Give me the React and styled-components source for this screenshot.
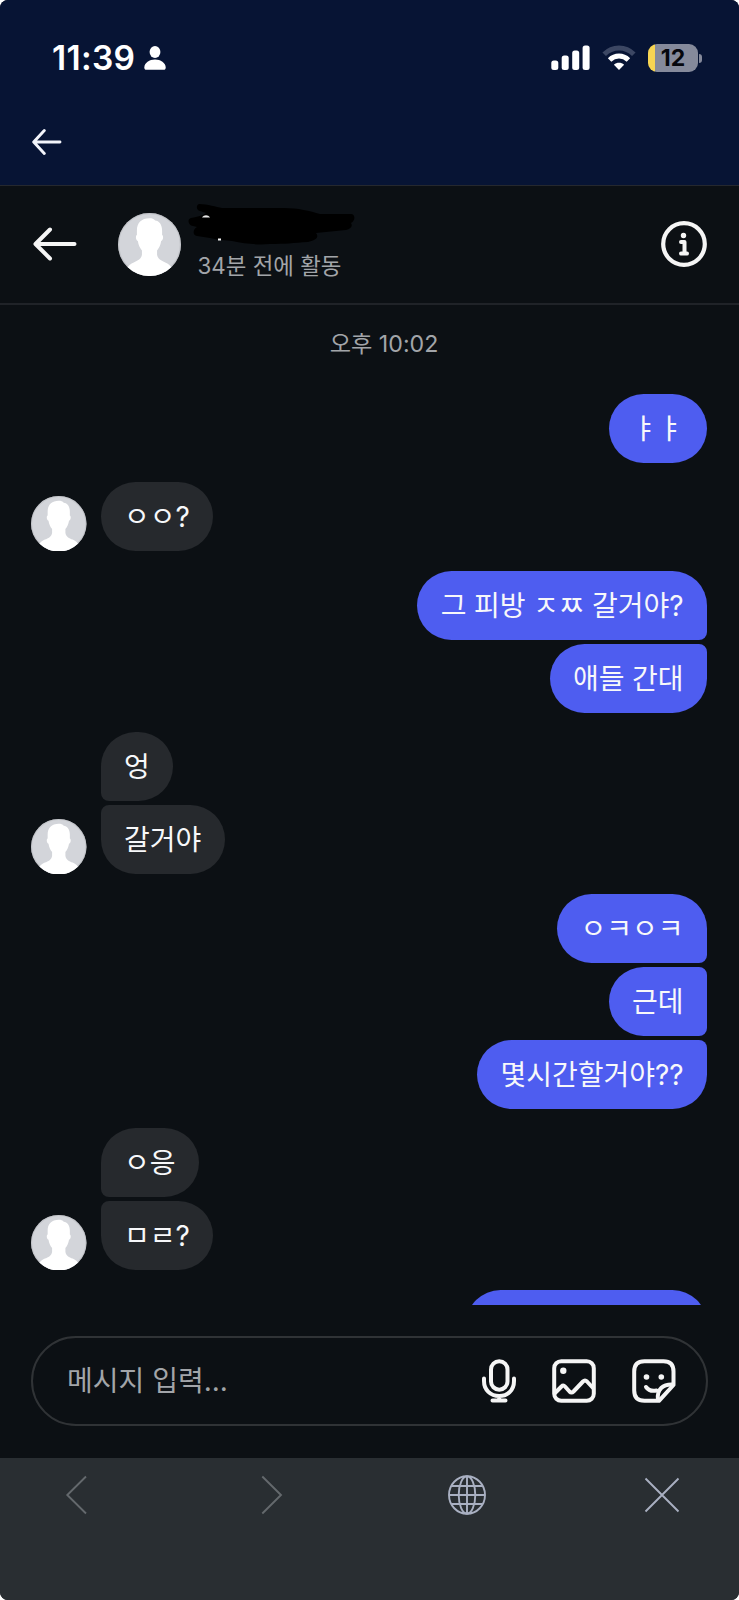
import React from 'react';
import styled, { createGlobalStyle } from 'styled-components';

const groups = [
  { mine: true, messages: ['ㅑㅑ'] },
  { mine: false, messages: ['ㅇㅇ?'] },
  { mine: true, messages: ['그 피방 ㅈㅉ 갈거야?', '애들 간대'] },
  { mine: false, messages: ['엉', '갈거야'] },
  { mine: true, messages: ['ㅇㅋㅇㅋ', '근데', '몇시간할거야??'] },
  { mine: false, messages: ['ㅇ응', 'ㅁㄹ?'] },
  { mine: true, messages: [''] },
];

const Avatar = ({ size }) => (
  <AvatarSvg $size={size} viewBox="0 0 100 100">
    <circle cx="50" cy="50" r="50" fill="#d3d5da" />
    <circle cx="50" cy="50" r="49" fill="none" stroke="#b9bbc0" strokeWidth="2" strokeOpacity="0.6" />
    <path
      d="M50 8.5C37 8.5 30 16 30 28V35C27.500 36 28 43 31.500 44.500C32.500 51 35 56 38 59.500V66C37.500 73 31 76 25 78.500C20 80.500 17 83 15.500 86.200A50 50 0 0 0 84.500 86.200C83 83 80 80.500 75 78.500C69 76 62.500 73 62 66V59.500C65 56 67.500 51 68.500 44.500C72 43 72.500 36 70 35V28C70 18 65 12.500 59 12C57 9.500 54 8.500 50 8.500Z"
      fill="#fff"
    />
  </AvatarSvg>
);

const StatusBar = () => (
  <Status>
    <Clock>11:39</Clock>
    <svg width="24" height="24" viewBox="0 0 24 24" fill="#fff">
      <ellipse cx="12" cy="6" rx="5.400" ry="6" />
      <path d="M12 13.500C17.500 13.500 22.700 17 22.700 21.500C22.700 23 22 23.800 20.700 23.800H3.300C2 23.800 1.300 23 1.300 21.500C1.300 17 6.500 13.500 12 13.500Z" />
    </svg>
    <Indicators>
      <svg width="39" height="26" viewBox="0 0 39 26" fill="#fff">
        <rect x="0.300" y="15.500" width="7" height="9.500" rx="2.500" />
        <rect x="10.700" y="10.500" width="7" height="14.500" rx="2.500" />
        <rect x="21.200" y="5.500" width="7" height="19.500" rx="2.500" />
        <rect x="31.600" y="0.500" width="7" height="24.500" rx="2.500" />
      </svg>
      <svg width="34" height="26" viewBox="0 0 34 26" fill="none">
        <path d="M2.200 9.300C10.500 0.900 23.500 0.900 31.800 9.300" stroke="#3c4763" strokeWidth="5" />
        <path d="M7.600 15C13 9.800 21 9.800 26.400 15" stroke="#fff" strokeWidth="5" />
        <path d="M17 25L11.900 19.800C14.800 17.200 19.200 17.200 22.100 19.800Z" fill="#fff" />
      </svg>
      <Battery>
        <Level>12</Level>
        <Nub />
      </Battery>
    </Indicators>
  </Status>
);

// name of the other person, crossed out with a marker
const HiddenName = () => (
  <Scribble width="168" height="46" viewBox="0 0 168 46">
    <path
      d="M11 2C8 3 8 8 12 9L18 11C14 14 8 15 3 16C-1 17 0 23 5 24L9 25C5 27 4 33 9 34L22 36C30 38 38 38 44 39C58 42 70 43 82 42C96 42 106 41 120 40C126 39 132 36 128 31L158 28C163 27 165 24 163 21C168 18 167 12 163 12H132C122 9 110 6 96 6H34C28 5 20 2 11 2Z"
      fill="#000"
    />
    <path d="M14 15.500C16 12.500 20 12.500 22 15.500Z" fill="#e8e8e8" />
    <rect x="30" y="36.500" width="3" height="2" fill="#f4f4f4" />
  </Scribble>
);

const App = () => {
  return (
    <>
      <GlobalStyle />
      <Screen>
        <TopBar>
          <StatusBar />
          <AppNav>
            <svg width="30" height="28" viewBox="0 0 30 28" fill="none" stroke="#f2f4fa" strokeWidth="2.900" strokeLinecap="round">
              <path d="M12.300 2.500L1.700 14L12.300 25.500M2 14H28" strokeLinejoin="round" />
            </svg>
          </AppNav>
        </TopBar>
        <ThreadHeader>
          <svg width="44" height="36" viewBox="0 0 44 36" fill="none" stroke="#f5f5f5" strokeWidth="4" strokeLinecap="round" strokeLinejoin="round">
            <path d="M17 3.500L2.500 18L17 32.500M3 18H41.500" />
          </svg>
          <Avatar size={63} />
          <Person>
            <HiddenName />
            <Activity>34분 전에 활동</Activity>
          </Person>
          <svg width="46" height="46" viewBox="0 0 46 46" fill="none" stroke="#f5f5f5" strokeLinecap="round" strokeLinejoin="round">
            <circle cx="23" cy="23" r="20.800" strokeWidth="4.200" />
            <circle cx="22.500" cy="14.500" r="2.700" fill="#f5f5f5" stroke="none" />
            <path d="M20 21H23.500V32.500M20 32.500H26" strokeWidth="4" />
          </svg>
        </ThreadHeader>
        <Thread>
          <Timestamp>오후 10:02</Timestamp>
          {groups.map((group, index) => (
            <Group key={index} $mine={group.mine}>
              {!group.mine && <Avatar size={55.5} />}
              <Stack $mine={group.mine}>
                {group.messages.map((text, i) => (
                  <Bubble
                    key={i}
                    $mine={group.mine}
                    $first={i === 0}
                    $last={i === group.messages.length - 1}
                    $empty={!text}
                  >
                    {text}
                  </Bubble>
                ))}
              </Stack>
            </Group>
          ))}
        </Thread>
        <Composer>
          <Placeholder>메시지 입력...</Placeholder>
          <Tools>
            <svg width="34" height="44" viewBox="0 0 34 44" fill="none" stroke="#f5f5f5" strokeWidth="4" strokeLinecap="round">
              <rect x="9" y="2.200" width="16.500" height="28.500" rx="8.250" />
              <path d="M2 19.500V22C2 31 8.500 37 17.200 37S32 31 32 22V19.500M17.200 37V41.500M10.500 41.500H23.500" />
            </svg>
            <svg width="44" height="44" viewBox="0 0 44 44" fill="none" stroke="#f5f5f5" strokeWidth="4" strokeLinejoin="round">
              <rect x="2.200" y="2.200" width="39.600" height="39.600" rx="7" />
              <circle cx="11.300" cy="11.700" r="3.200" fill="#f5f5f5" stroke="none" />
              <path d="M2.500 34.500L9.500 27.500Q11.300 25.700 13 27.500L17.500 32.500Q19.500 34.500 21.500 32.500L31 22.500Q33 20.500 35 22.500L41.500 29.500" />
            </svg>
            <svg width="44" height="44" viewBox="0 0 44 44" fill="none" stroke="#f5f5f5" strokeWidth="4" strokeLinecap="round" strokeLinejoin="round">
              <path d="M12.500 2.200H31.500Q41.500 2.200 41.500 12.500V26L27 41.800H12.500Q2.200 41.800 2.200 31.500V12.500Q2.200 2.200 12.500 2.200Z" />
              <path d="M41 25.500C31 25 24.500 30 26 41" />
              <path d="M14 28C16.500 31.500 20 32.500 24.500 31.500" />
              <circle cx="14.500" cy="18" r="2.800" fill="#f5f5f5" stroke="none" />
              <circle cx="29.300" cy="18" r="2.800" fill="#f5f5f5" stroke="none" />
            </svg>
          </Tools>
        </Composer>
        <BrowserBar>
          <BarIcon viewBox="0 0 40 40" $color="#64696d">
            <path d="M30 1.500L11.300 20L30 38.500" />
          </BarIcon>
          <BarIcon viewBox="0 0 40 40" $color="#64696d">
            <path d="M11.300 1.500L30 20L11.300 38.500" />
          </BarIcon>
          <BarIcon viewBox="0 0 40 40" $color="#a9b0c2">
            <ellipse cx="20" cy="20" rx="18" ry="18.700" />
            <ellipse cx="20" cy="20" rx="8.300" ry="18.700" />
            <path d="M20 1.300V38.700M2 20H38M5 11H35M5 29H35" />
          </BarIcon>
          <BarIcon viewBox="0 0 40 40" $color="#a9b0c2">
            <path d="M3.500 3.500L36.500 36.500M36.500 3.500L3.500 36.500" />
          </BarIcon>
        </BrowserBar>
      </Screen>
    </>
  );
};

const GlobalStyle = createGlobalStyle`
  * {
    box-sizing: border-box;
  }
  body {
    margin: 0;
    background-color: #fff;
    font-family: Inter, "Noto Sans CJK KR", sans-serif;
  }
  svg {
    display: block;
    flex-shrink: 0;
  }
`;

const Screen = styled.div`
  display: flex;
  flex-direction: column;
  width: 739px;
  height: 1600px;
  border-radius: 8px;
  overflow: hidden;
  background-color: #0c1014;
`;

const TopBar = styled.div`
  height: 186px;
  border-bottom: 1px solid #25282e;
  background-color: #071434;
`;

const Status = styled.div`
  display: flex;
  align-items: center;
  height: 116px;
  padding: 0 37px 0 52px;
`;

const Clock = styled.span`
  width: 91px;
  color: #fff;
  font-size: 33.500px;
  font-weight: 600;
  letter-spacing: 0.300px;
  line-height: 40px;
`;

const Indicators = styled.div`
  display: flex;
  align-items: center;
  gap: 12px;
  margin-left: auto;
`;

const Battery = styled.div`
  display: flex;
  align-items: center;
  gap: 1px;
`;

const Level = styled.div`
  width: 50px;
  height: 28px;
  border-radius: 9px;
  background: linear-gradient(90deg, #f7d553 7px, #858a9b 7px);
  color: #05070d;
  font-size: 23px;
  font-weight: 700;
  line-height: 28px;
  text-align: center;
`;

const Nub = styled.div`
  width: 3px;
  height: 9px;
  border-radius: 0 4px 4px 0;
  background-color: #858a9b;
`;

const AppNav = styled.div`
  padding: 11.500px 32px;
`;

const ThreadHeader = styled.header`
  display: flex;
  align-items: center;
  height: 119px;
  padding: 0 32px 1px 33px;
  border-bottom: 2px solid #202328;
`;

const AvatarSvg = styled.svg`
  width: ${({ $size }) => $size}px;
  height: ${({ $size }) => $size}px;
  ${ThreadHeader} & {
    margin-left: 41px;
  }
`;

const Person = styled.div`
  flex: 1;
  height: 84px;
  padding-left: 16.500px;
`;

const Scribble = styled.svg`
  margin-left: -10px;
`;

const Activity = styled.div`
  color: #a2a5a9;
  font-size: 22.400px;
  line-height: 36px;
`;

const Thread = styled.main`
  display: flex;
  flex-direction: column;
  gap: 19.500px;
  height: 1000px;
  padding: 0 32px 0 31px;
  overflow: hidden;
`;

const Timestamp = styled.div`
  flex-shrink: 0;
  height: 69px;
  padding: 23px 0 0 30px;
  color: #a2a5a9;
  font-size: 23.200px;
  line-height: 32px;
  text-align: center;
`;

const Group = styled.div`
  display: flex;
  flex-shrink: 0;
  align-items: flex-end;
  justify-content: ${({ $mine }) => ($mine ? 'flex-end' : 'flex-start')};
  gap: 14px;
`;

const Stack = styled.div`
  display: flex;
  flex-direction: column;
  align-items: ${({ $mine }) => ($mine ? 'flex-end' : 'flex-start')};
  gap: 4px;
`;

const corner = (joined) => (joined ? '8px' : '34.500px');

const Bubble = styled.div`
  height: 69px;
  min-width: ${({ $empty }) => ($empty ? '241px' : '0')};
  padding: 0 23.400px;
  border-radius: ${({ $mine, $first, $last }) =>
    $mine
      ? `34.500px ${corner(!$first)} ${corner(!$last)} 34.500px`
      : `${corner(!$first)} 34.500px 34.500px ${corner(!$last)}`};
  background-color: ${({ $mine }) => ($mine ? '#4e5df0' : '#26292d')};
  color: #f7f8fa;
  font-size: 28px;
  line-height: 70px;
  word-spacing: -0.400px;
  white-space: nowrap;
`;

const Composer = styled.div`
  display: flex;
  align-items: center;
  justify-content: space-between;
  height: 90px;
  margin: 31px 31.500px 32px 31px;
  padding: 0 30px 0 34px;
  border: 2px solid #303336;
  border-radius: 45px;
`;

const Placeholder = styled.div`
  color: #a2a5a9;
  font-size: 28px;
  line-height: 40px;
`;

const Tools = styled.div`
  display: flex;
  align-items: center;
  gap: 36px;
`;

const BrowserBar = styled.nav`
  display: flex;
  flex: 1;
  align-items: flex-start;
  justify-content: space-between;
  padding: 17px 57px 0 56px;
  background-color: #292e32;
`;

const BarIcon = styled.svg`
  width: 40px;
  height: 40px;
  fill: none;
  stroke: ${({ $color }) => $color};
  stroke-width: 1.9px;
`;

export default App;
